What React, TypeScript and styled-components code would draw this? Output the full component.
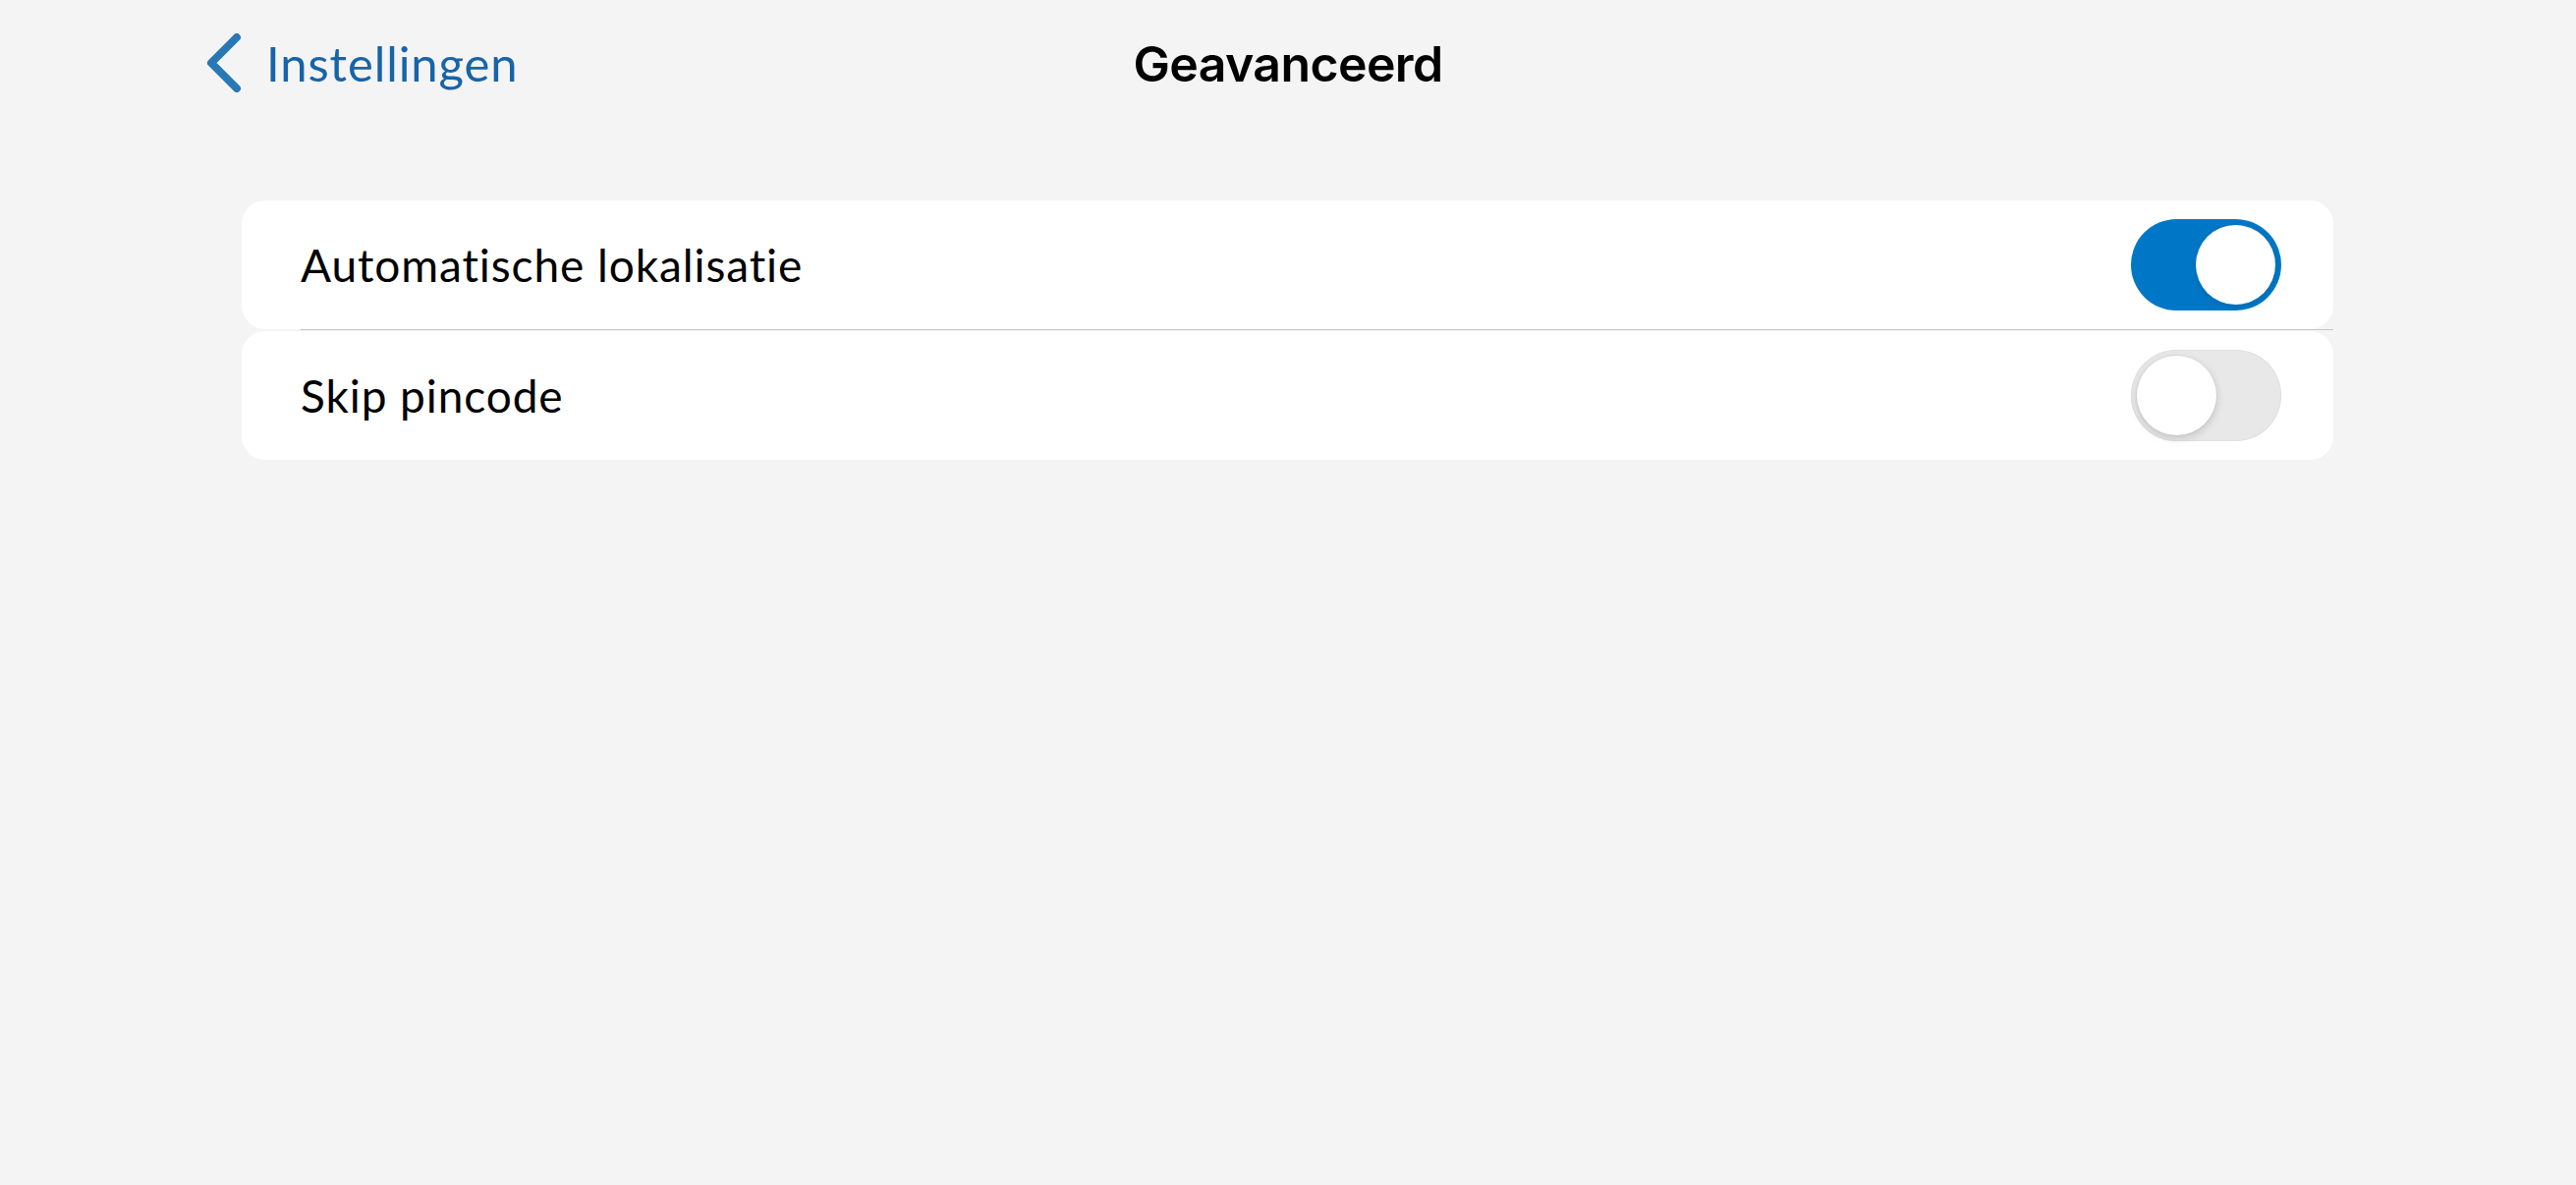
import React, { useState } from "react";
import styled, { createGlobalStyle } from "styled-components";

const GlobalStyle = createGlobalStyle`
  html, body {
    margin: 0;
    padding: 0;
    background: #f4f4f4;
  }
  body {
    font-family: Lato, "Noto Sans", sans-serif;
    -webkit-font-smoothing: antialiased;
  }
  #root {
    min-height: 100vh;
  }
`;

const Page = styled.div`
  min-height: 100vh;
  background: #f4f4f4;
  display: flex;
  flex-direction: column;
`;

const NavBar = styled.header`
  display: grid;
  grid-template-columns: 1fr auto 1fr;
  align-items: center;
  height: 130px;
  padding: 0 210px;
`;

const BackButton = styled.button`
  justify-self: start;
  display: flex;
  align-items: center;
  gap: 25px;
  background: none;
  border: none;
  padding: 0;
  margin-top: -2px;
  cursor: pointer;
  color: #1764a8;
  font-family: Lato, "Noto Sans", sans-serif;
  font-size: 49px;
  letter-spacing: 0.9px;
  font-weight: 400;
`;

const Title = styled.h1`
  margin: 0;
  font-family: Inter, "Noto Sans", sans-serif;
  font-weight: 600;
  font-size: 50px;
  letter-spacing: -0.6px;
  color: #000;
`;

const Content = styled.main`
  padding: 74px 247px 0 246px;
`;

const List = styled.div`
  display: flex;
  flex-direction: column;
`;

const Row = styled.div`
  display: flex;
  align-items: center;
  justify-content: space-between;
  height: 131px;
  padding: 0 53px 0 60px;
  background: #ffffff;
  border-radius: 24px;
`;

const Label = styled.span`
  font-family: Lato, "Noto Sans", sans-serif;
  font-size: 46px;
  letter-spacing: 0.9px;
  color: #000;
  margin-top: -1px;
`;

const Separator = styled.div`
  height: 1px;
  margin: 0 0 1px 60px;
  background: #c6c6c6;
`;

const Track = styled.button<{ $on: boolean }>`
  position: relative;
  width: 153px;
  height: 93px;
  border: none;
  padding: 0;
  border-radius: 47px;
  cursor: pointer;
  background: ${(p) => (p.$on ? "#0077c6" : "#e8e8e8")};
  box-shadow: ${(p) => (p.$on ? "none" : "inset 0 0 0 1px #e0e0e0")};
`;

const Knob = styled.span<{ $on: boolean }>`
  position: absolute;
  top: 6px;
  left: ${(p) => (p.$on ? "66px" : "6px")};
  width: 81px;
  height: 81px;
  border-radius: 50%;
  background: #ffffff;
  box-shadow: ${(p) =>
    p.$on ? "0 2px 6px rgba(0, 40, 80, 0.18)" : "0 3px 9px rgba(0, 0, 0, 0.16), 0 0 0 1px rgba(0,0,0,0.03)"};
`;

const Chevron = () => (
  <svg width="36" height="60" viewBox="0 0 36 60" aria-hidden="true">
    <path
      d="M31 4 L5 30 L31 56"
      fill="none"
      stroke="#2878b6"
      strokeWidth="8"
      strokeLinecap="round"
      strokeLinejoin="round"
    />
  </svg>
);

const Toggle = ({ on, onChange }: { on: boolean; onChange: () => void }) => (
  <Track $on={on} onClick={onChange} role="switch" aria-checked={on}>
    <Knob $on={on} />
  </Track>
);

export default function App() {
  const [auto, setAuto] = useState(true);
  const [skip, setSkip] = useState(false);

  return (
    <Page>
      <GlobalStyle />
      <NavBar>
        <BackButton>
          <Chevron />
          <span>Instellingen</span>
        </BackButton>
        <Title>Geavanceerd</Title>
        <div />
      </NavBar>
      <Content>
        <List>
          <Row>
            <Label>Automatische lokalisatie</Label>
            <Toggle on={auto} onChange={() => setAuto(!auto)} />
          </Row>
          <Separator />
          <Row>
            <Label>Skip pincode</Label>
            <Toggle on={skip} onChange={() => setSkip(!skip)} />
          </Row>
        </List>
      </Content>
    </Page>
  );
}
